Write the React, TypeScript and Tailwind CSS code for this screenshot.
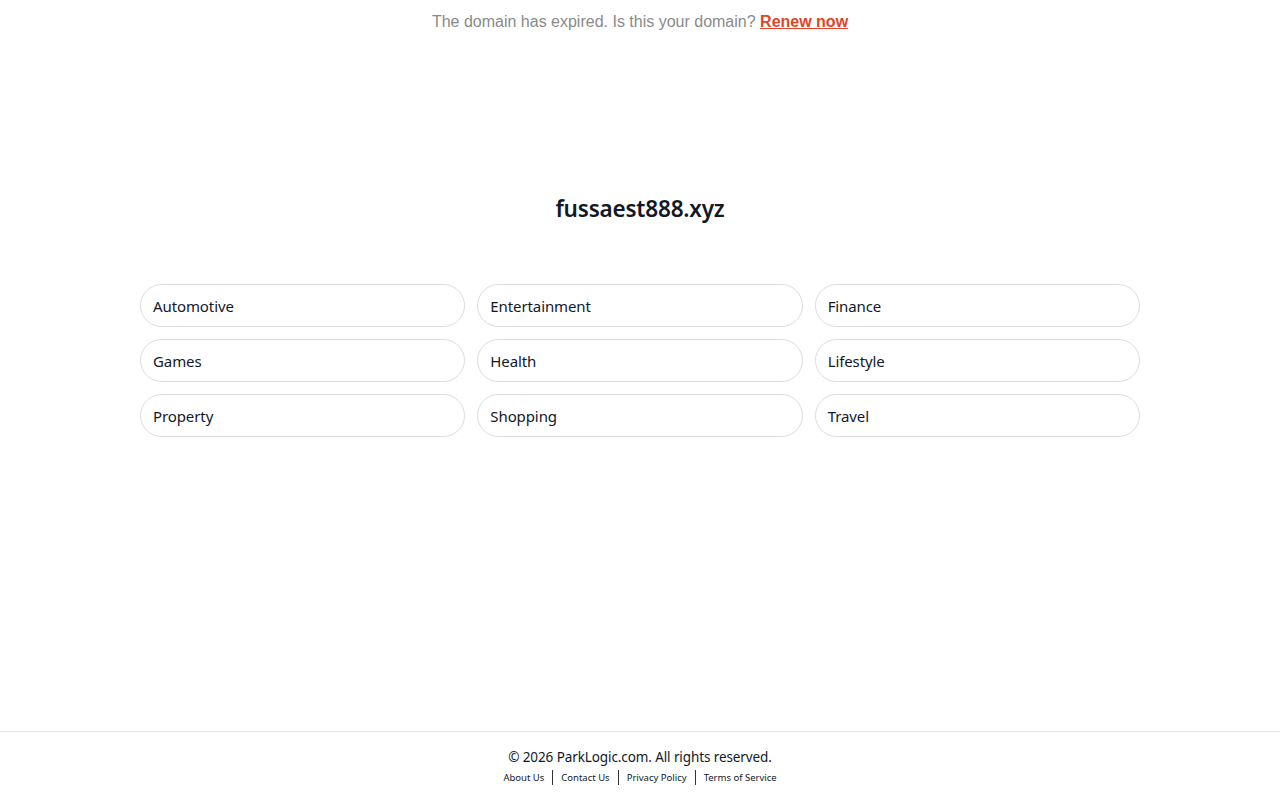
const categories = [
  'Automotive',
  'Entertainment',
  'Finance',
  'Games',
  'Health',
  'Lifestyle',
  'Property',
  'Shopping',
  'Travel'
];

const footerLinks = ['About Us', 'Contact Us', 'Privacy Policy', 'Terms of Service'];

const App = () => {
  return (
    <div className="min-h-[800px] flex flex-col bg-white font-['Noto_Sans',sans-serif] text-[#111827]">
      <div className="pt-[10px] text-center font-['Liberation_Sans',Arial,sans-serif] text-[16px] text-[#8a8a8a]">
        The domain has expired. Is this your domain?{' '}
        <a href="#" className="font-bold text-[#e0452b] underline">
          Renew now
        </a>
      </div>

      <main className="flex-1 flex flex-col items-center">
        <h1 className="mt-[158px] text-[22.5px] font-semibold tracking-[-0.2px]">fussaest888.xyz</h1>
        <div className="mt-[58px] w-[1000px] grid grid-cols-3 gap-x-[12px] gap-y-[12px]">
          {categories.map((name) => (
            <a
              key={name}
              href="#"
              className="h-[43px] flex items-center pl-[12px] pt-[2px] rounded-full border border-[#dcdcdc] text-[15px] tracking-[-0.1px]"
            >
              {name}
            </a>
          ))}
        </div>
      </main>

      <footer className="h-[69px] border-t border-[#e5e5e5] flex flex-col items-center pt-[15px]">
        <p className="text-[13.5px] tracking-[-0.1px]">© 2026 ParkLogic.com. All rights reserved.</p>
        <div className="flex items-center text-[9.5px] mt-[3px]">
          {footerLinks.map((link, index) => (
            <span key={link} className="flex items-center">
              {index > 0 && <span className="mx-[8px] h-[15px] w-px bg-[#333]" />}
              <a href="#">{link}</a>
            </span>
          ))}
        </div>
      </footer>
    </div>
  );
};

export default App;
